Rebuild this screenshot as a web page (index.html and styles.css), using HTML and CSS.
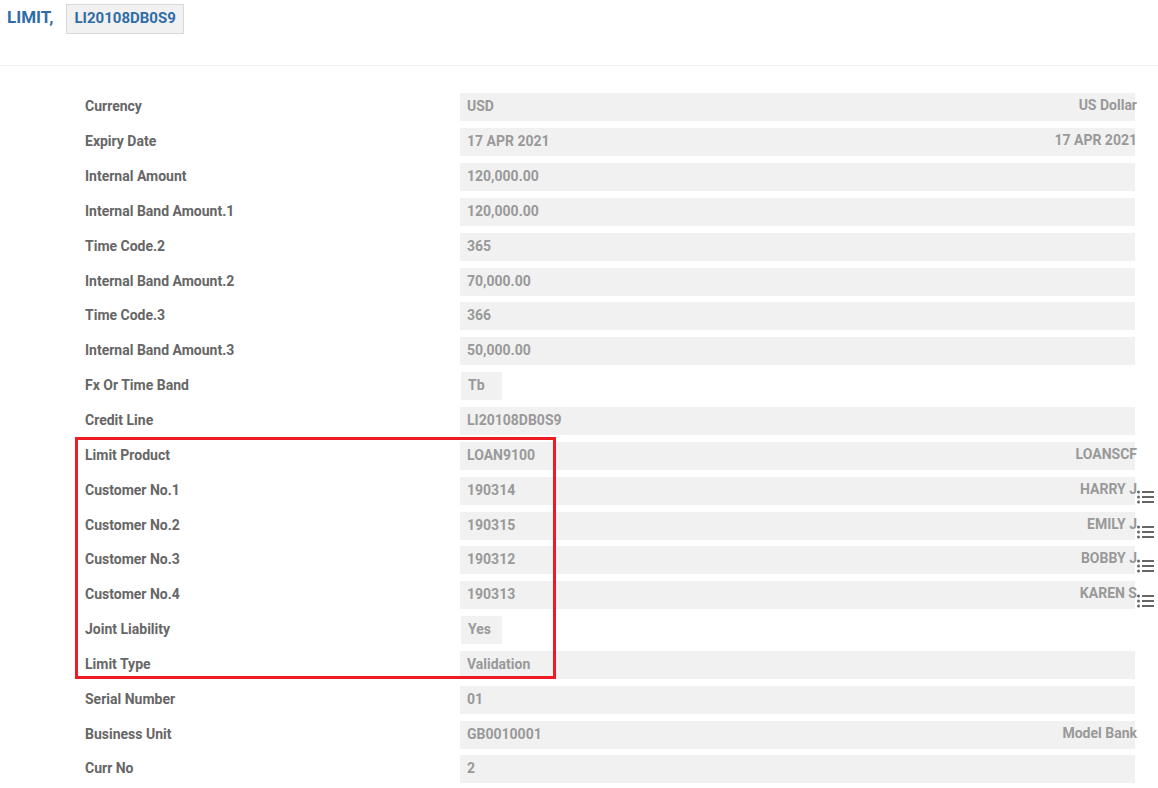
FILE: index.html
```html
<!DOCTYPE html>
<html lang="en">
<head>
<meta charset="utf-8">
<title>LIMIT, LI20108DB0S9</title>
<link rel="stylesheet" href="styles.css">
</head>
<body>
<header class="header">
  <h1 class="title">LIMIT,</h1>
  <span class="record">LI20108DB0S9</span>
</header>
<svg class="defs" aria-hidden="true"><symbol id="list" viewBox="0 0 17 14"><path d="M5 1h12v2H5zM5 6h12v2H5zM5 11h12v2H5z"/><circle cx="1.5" cy="2" r="1.5"/><circle cx="1.5" cy="7" r="1.5"/><circle cx="1.5" cy="12" r="1.5"/></symbol></svg>
<main class="form">
  <div class="row"><label class="label" for="f1">Currency</label><div class="field"><input class="value" id="f1" value="USD" readonly><span class="note">US Dollar</span></div></div>
  <div class="row"><label class="label" for="f2">Expiry Date</label><div class="field"><input class="value" id="f2" value="17 APR 2021" readonly><span class="note">17 APR 2021</span></div></div>
  <div class="row"><label class="label" for="f3">Internal Amount</label><div class="field"><input class="value" id="f3" value="120,000.00" readonly></div></div>
  <div class="row"><label class="label" for="f4">Internal Band Amount.1</label><div class="field"><input class="value" id="f4" value="120,000.00" readonly></div></div>
  <div class="row"><label class="label" for="f5">Time Code.2</label><div class="field"><input class="value" id="f5" value="365" readonly></div></div>
  <div class="row"><label class="label" for="f6">Internal Band Amount.2</label><div class="field"><input class="value" id="f6" value="70,000.00" readonly></div></div>
  <div class="row snug"><label class="label" for="f7">Time Code.3</label><div class="field"><input class="value" id="f7" value="366" readonly></div></div>
  <div class="row"><label class="label" for="f8">Internal Band Amount.3</label><div class="field"><input class="value" id="f8" value="50,000.00" readonly></div></div>
  <div class="row"><label class="label" for="f9">Fx Or Time Band</label><div class="field"><input class="value short" id="f9" value="Tb" readonly></div></div>
  <div class="row"><label class="label" for="f10">Credit Line</label><div class="field"><input class="value" id="f10" value="LI20108DB0S9" readonly></div></div>
  <section class="marked">
    <div class="row"><label class="label" for="f11">Limit Product</label><div class="field"><input class="value" id="f11" value="LOAN9100" readonly><span class="note">LOANSCF</span></div></div>
    <div class="row"><label class="label" for="f12">Customer No.1</label><div class="field"><input class="value" id="f12" value="190314" readonly><span class="note">HARRY J</span></div><button class="pick" type="button" aria-label="Customer 1 list"><svg class="icon"><use href="#list"/></svg></button></div>
    <div class="row"><label class="label" for="f13">Customer No.2</label><div class="field"><input class="value" id="f13" value="190315" readonly><span class="note">EMILY J</span></div><button class="pick" type="button" aria-label="Customer 2 list"><svg class="icon"><use href="#list"/></svg></button></div>
    <div class="row snug"><label class="label" for="f14">Customer No.3</label><div class="field"><input class="value" id="f14" value="190312" readonly><span class="note">BOBBY J</span></div><button class="pick" type="button" aria-label="Customer 3 list"><svg class="icon"><use href="#list"/></svg></button></div>
    <div class="row"><label class="label" for="f15">Customer No.4</label><div class="field"><input class="value" id="f15" value="190313" readonly><span class="note">KAREN S</span></div><button class="pick" type="button" aria-label="Customer 4 list"><svg class="icon"><use href="#list"/></svg></button></div>
    <div class="row"><label class="label" for="f16">Joint Liability</label><div class="field"><input class="value short" id="f16" value="Yes" readonly></div></div>
    <div class="row"><label class="label" for="f17">Limit Type</label><div class="field"><input class="value" id="f17" value="Validation" readonly></div></div>
  </section>
  <div class="row"><label class="label" for="f18">Serial Number</label><div class="field"><input class="value" id="f18" value="01" readonly></div></div>
  <div class="row"><label class="label" for="f19">Business Unit</label><div class="field"><input class="value" id="f19" value="GB0010001" readonly><span class="note">Model Bank</span></div></div>
  <div class="row snug"><label class="label" for="f20">Curr No</label><div class="field"><input class="value" id="f20" value="2" readonly></div></div>
</main>
</body>
</html>
```
FILE: styles.css
```css
*, *::after { box-sizing: border-box; }
body {
  margin: 0;
  background: #fff;
  color: #666;
  font: bold 14px/18px Roboto, "Liberation Sans", sans-serif;
}
.header {
  display: flex;
  align-items: flex-start;
  gap: 13px;
  padding: 4px 7px 31px;
  border-bottom: 1px solid #eee;
  color: #306ca6;
}
.title {
  margin: 0;
  font-size: 17px;
  line-height: 26px;
}
.record {
  padding: 0 7px 2px;
  border: 1px solid #d9d9d9;
  background: #f1f1f1;
  font-size: 15px;
  line-height: 26px;
}
.defs { display: none; }
.form { padding: 20px 0 5px 85px; }
.row {
  display: grid;
  grid-template-columns: 375px 1fr 23px;
  padding-top: 7px;
}
.row.snug { padding-top: 6px; }
.label { line-height: 26px; }
.field { display: grid; }
.value, .note { grid-area: 1 / 1; }
.value {
  width: 100%;
  height: 28px;
  padding: 0 7px 2px;
  border: 0;
  border-radius: 0;
  outline: 0;
  background: #f1f1f1;
  color: #999;
  font: inherit;
}
.value.short {
  width: 41px;
  margin-left: 1px;
}
.note {
  justify-self: end;
  margin-right: -2px;
  color: #999;
  line-height: 24px;
}
.pick {
  align-self: start;
  width: 17px;
  height: 14px;
  margin: 13px 0 0 2px;
  padding: 0;
  border: 0;
  background: none;
  color: #666;
}
.icon {
  display: block;
  width: 17px;
  height: 14px;
  fill: currentColor;
}
.marked { position: relative; }
.marked::after {
  content: "";
  position: absolute;
  top: 2px;
  bottom: 0;
  left: -10px;
  width: 481px;
  border: 3px solid #ed1c24;
  pointer-events: none;
}
```
